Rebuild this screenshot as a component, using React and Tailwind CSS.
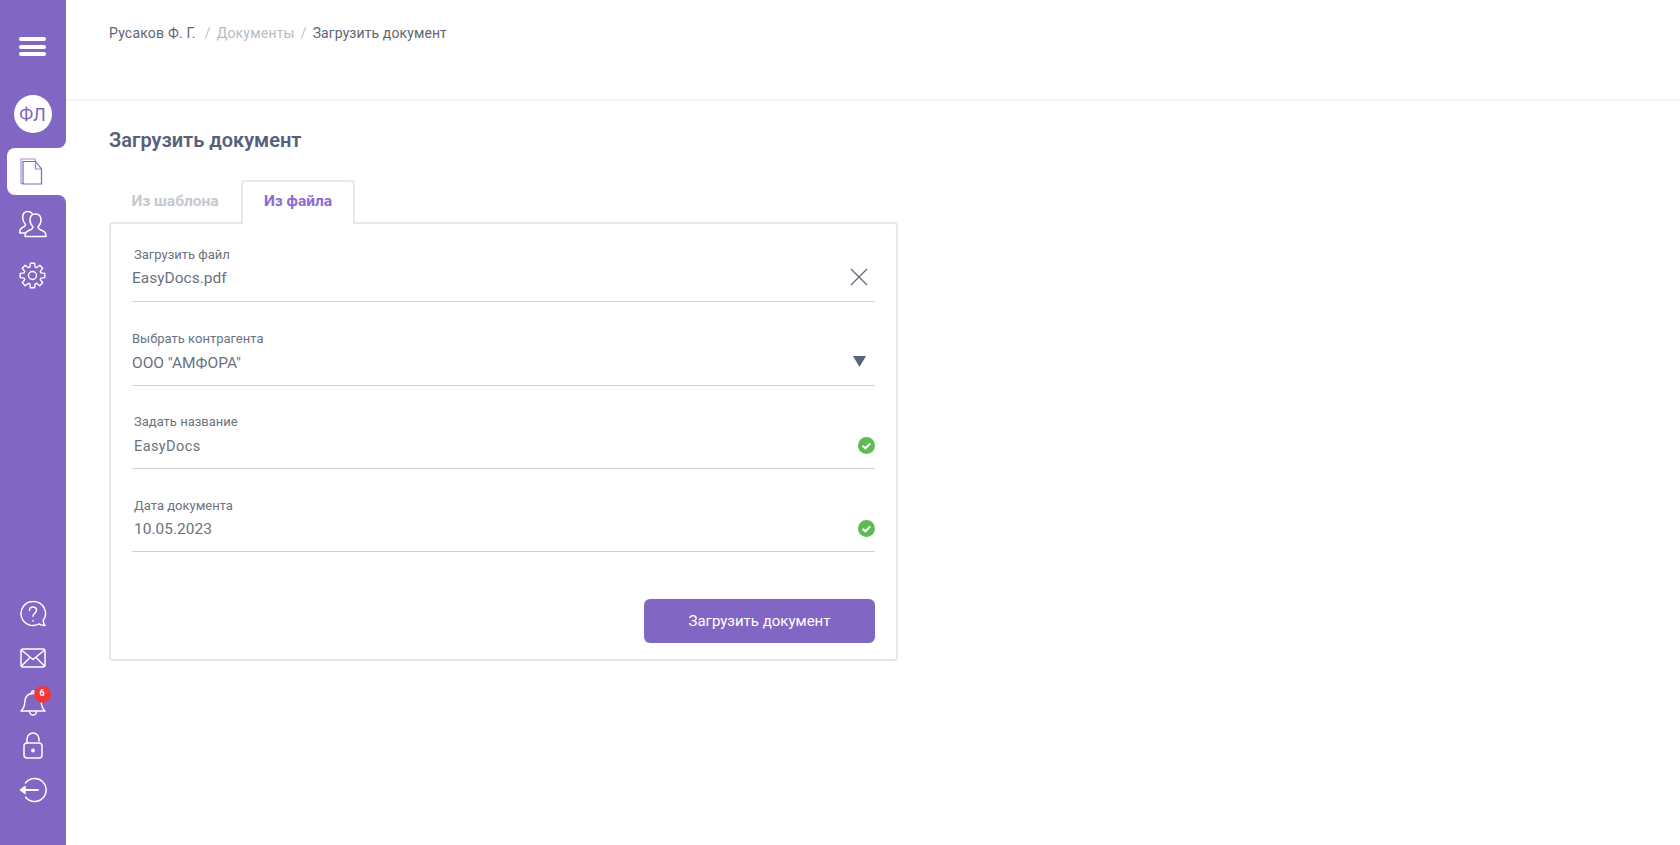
const font = { fontFamily: 'Roboto, sans-serif' }

// 8 зубьев, контур считается один раз
function gearPath(cx, cy, outer, inner) {
  const pts = []
  for (let i = 0; i < 8; i++) {
    const a = (i * Math.PI) / 4
    const step = [
      [-0.3, inner],
      [-0.17, outer],
      [0.17, outer],
      [0.3, inner],
    ]
    step.forEach(([d, r]) => {
      pts.push(`${(cx + r * Math.cos(a + d)).toFixed(2)} ${(cy + r * Math.sin(a + d)).toFixed(2)}`)
    })
  }
  return 'M' + pts.join('L') + 'z'
}

function Field({ label, value, labelClass = 'bottom-[38px]', valueClass = 'bottom-[12px] text-[15.5px]', icon, height = 'h-[84px]' }) {
  return (
    <div className={`relative border-b border-[#cfd1d6] ${height}`}>
      <div className={`absolute text-[13px] leading-4 text-[#6b7280] ${labelClass}`}>{label}</div>
      <div className={`absolute leading-5 text-[#6b7280] ${valueClass}`}>{value}</div>
      {icon}
    </div>
  )
}

function CheckIcon() {
  return (
    <svg className="absolute right-0 bottom-[14px] h-[17px] w-[17px]" viewBox="0 0 17 17">
      <circle cx="8.500" cy="8.500" r="8.500" fill="#5dbb54" />
      <path d="M4.500 8.800l2.800 2.500 5-4.800" fill="none" stroke="#fff" strokeWidth="2" />
    </svg>
  )
}

function BottomIcon({ children }) {
  return <div className="relative flex h-[44px] w-full items-center justify-center">{children}</div>
}

function Sidebar() {
  const stroke = { fill: 'none', stroke: '#fff', strokeWidth: 1.5, strokeLinecap: 'round', strokeLinejoin: 'round' }
  return (
    <div className="flex w-[66px] shrink-0 flex-col">
      <div className="flex h-[148px] flex-col items-center rounded-br-lg bg-[#8266c4] pt-[37px]">
        <div className="mr-[1px] flex w-[27px] flex-col gap-[3.5px]">
          <div className="h-[4px] rounded-full bg-white" />
          <div className="h-[4px] rounded-full bg-white" />
          <div className="h-[4px] rounded-full bg-white" />
        </div>
        <div className="mt-[39px] mr-[1px] flex h-[38px] w-[38px] items-center justify-center rounded-full bg-white text-[18px] text-[#7a67b8]">ФЛ</div>
      </div>
      <div className="flex h-[47px] bg-[#8266c4]">
        <div className="ml-[7px] flex flex-1 items-center justify-center rounded-l-lg bg-white pr-[11px]">
          <svg className="h-[27px] w-[23px]" viewBox="0 0 23 27" fill="none" stroke="#8266c4" strokeWidth="1.2">
            <path d="M1 25.500V1h14v2.500" strokeOpacity="0.7" />
            <path d="M1 25.500h2.500" strokeOpacity="0.7" />
            <path d="M3 3.500h12.500l6 7.500v15H3z" />
            <path d="M15.500 3.500V11h6" strokeOpacity="0.8" />
          </svg>
        </div>
      </div>
      <div className="flex flex-1 flex-col items-center rounded-tr-lg bg-[#8266c4]">
        <svg className="mt-[15px] h-[28px] w-[28px]" viewBox="0 0 28 28" {...stroke}>
          <g transform="translate(28 0) scale(-1 1)">
            <path d="M1 26.500c0-4 1.500-5 5-6.500 2-.8 3-1.500 3-3-2-2-3-4-3-7 0-4 2.500-6 5.500-6s5.500 2 5.500 6c0 3-1 5-3 7 0 1.500 1 2.200 3 3 3.500 1.500 5 2.500 5 6.500z" />
            <path d="M14.500 4.200C15.500 2.500 17 1.500 19 1.500c3 0 5.300 2 5.300 6 0 3-1 5-2.800 7 0 1.500 1 2.200 3 3 1.800.8 2.800 3 2.800 5.500h-5" />
          </g>
        </svg>
        <svg className="mt-[24px] mr-[1px] h-[27px] w-[27px]" viewBox="0 0 27 27" fill="none" stroke="#fff" strokeWidth="1.400" strokeLinejoin="round">
          <path d={gearPath(13.5, 13.5, 12.5, 8.8)} />
          <circle cx="13.500" cy="13.500" r="4" />
        </svg>
        <div className="mt-auto flex w-full flex-col items-center pb-[33px]">
          <BottomIcon>
            <svg className="h-[28px] w-[28px]" viewBox="0 0 28 28" {...stroke}>
              <path d="M14 1.500a12 12 0 1 0 6 22.400c1.500 1 3.500 1.800 6 1.600-1-1-1.700-2.800-1.800-5A12 12 0 0 0 14 1.500z" />
              <path d="M10.500 10.500c0-2 1.500-3.500 3.500-3.500s3.500 1.400 3.500 3.300c0 3-3.500 3-3.500 6" />
              <path d="M14 20.500v.500" />
            </svg>
          </BottomIcon>
          <BottomIcon>
            <svg className="h-[20px] w-[26px]" viewBox="0 0 26 20" {...stroke}>
              <rect x="1" y="1" width="24" height="18" rx="2" />
              <path d="M2 2.500l11 9 11-9M2 17.500l8-8M24 17.500l-8-8" />
            </svg>
          </BottomIcon>
          <BottomIcon>
            <div className="relative mr-[1px] -mt-[1px] h-[28px] w-[26px]">
              <svg className="h-[28px] w-[26px]" viewBox="0 0 26 28" {...stroke}>
                <path d="M1 23c3-2.500 3.500-5 3.800-9 .3-5 2.500-8.500 8.200-8.500s8 3.500 8.200 8.500c.3 4 .8 6.500 3.800 9z" />
                <path d="M9.500 23.500c.3 2.500 1.800 3.500 3.500 3.500s3.200-1 3.500-3.500M11.500 5.500c0-1.500.5-2.500 1.500-2.500s1.500 1 1.500 2.500" />
              </svg>
              <div className="absolute -top-[2px] left-[14px] flex h-[17px] w-[17px] items-center justify-center rounded-full bg-[#f0383a] text-[9px] font-bold text-white">6</div>
            </div>
          </BottomIcon>
          <BottomIcon>
            <svg className="-mt-[1px] h-[27px] w-[20px]" viewBox="0 0 20 27" {...stroke}>
              <rect x="1" y="11" width="18" height="15" rx="3" />
              <path d="M4 11V7a6 6 0 0 1 12 0v2" />
              <circle cx="10" cy="18.500" r="1.200" />
            </svg>
          </BottomIcon>
          <BottomIcon>
            <svg className="h-[26px] w-[28px]" viewBox="0 0 28 26" {...stroke}>
              <path d="M6.500 6a11.500 11.500 0 1 1 0 14" />
              <path d="M19 13H2" strokeWidth="2" />
              <path d="M6 9.500L1.500 13 6 16.500z" fill="#fff" />
            </svg>
          </BottomIcon>
        </div>
      </div>
    </div>
  )
}

export default function App() {
  return (
    <div className="flex h-[845px] bg-white" style={font}>
      <Sidebar />
      <div className="flex-1">
        <div className="flex h-[101px] items-start border-b-2 border-[#f5f5f7] pl-[43px] pt-[23px] text-[14px] leading-5 tracking-[0.2px] text-[#5f6673]">
          <span>Русаков Ф. Г.</span>
          <span className="ml-[9px] text-[#bdbfc6]">/</span>
          <span className="ml-[6px] text-[#b9bbc2]">Документы</span>
          <span className="ml-[6px] text-[#bdbfc6]">/</span>
          <span className="ml-[6px] tracking-[0.1px]">Загрузить документ</span>
        </div>
        <div className="pl-[43px]">
          <h1 className="mt-[27px] text-[20px] leading-6 font-semibold text-[#56607a]">Загрузить документ</h1>
          <div className="mt-[28px] flex h-[42px] items-stretch">
            <div className="flex w-[132px] items-center justify-center pt-[1px] text-[15.500px] font-bold text-[#c5c7d2]">Из шаблона</div>
            <div className="relative z-10 -mb-[2px] flex w-[114px] items-center justify-center rounded-t border-2 border-b-0 border-[#e6e7ea] bg-white pb-[3px] text-[15.500px] font-bold text-[#8d6ad2]">Из файла</div>
          </div>
          <div className="h-[439px] w-[789px] rounded border-2 border-[#e6e7ea] bg-white px-[21px]">
            <Field
              label="Загрузить файл"
              value="EasyDocs.pdf"
              height="h-[78px]"
              labelClass="left-[2px] bottom-[38px]"
              valueClass="bottom-[13px] text-[15.500px]"
              icon={
                <svg className="absolute right-[7px] bottom-[15px] h-[18px] w-[18px]" viewBox="0 0 18 18" fill="none" stroke="#5f6673" strokeWidth="1.2">
                  <path d="M1 1l16 16M17 1L1 17" />
                </svg>
              }
            />
            <Field
              label="Выбрать контрагента"
              value={'ООО "АМФОРА"'}
              icon={
                <svg className="absolute right-[9px] bottom-[18px] h-[11px] w-[13px]" viewBox="0 0 13 11">
                  <path d="M0 0h13L6.500 11z" fill="#5a6478" />
                </svg>
              }
            />
            <Field label="Задать название" value="EasyDocs" height="h-[83px]" labelClass="left-[2px] bottom-[38px]" valueClass="left-[2px] bottom-[11px] text-[14.500px] tracking-[0.4px]" icon={<CheckIcon />} />
            <Field label="Дата документа" value="10.05.2023" height="h-[83px]" labelClass="left-[2px] bottom-[37px]" valueClass="left-[2px] bottom-[12px] text-[15.500px]" icon={<CheckIcon />} />
            <div className="mt-[47px] flex justify-end">
              <button className="h-[44px] w-[231px] rounded-md bg-[#8266c4] text-[15px] text-white">Загрузить документ</button>
            </div>
          </div>
        </div>
      </div>
    </div>
  )
}
